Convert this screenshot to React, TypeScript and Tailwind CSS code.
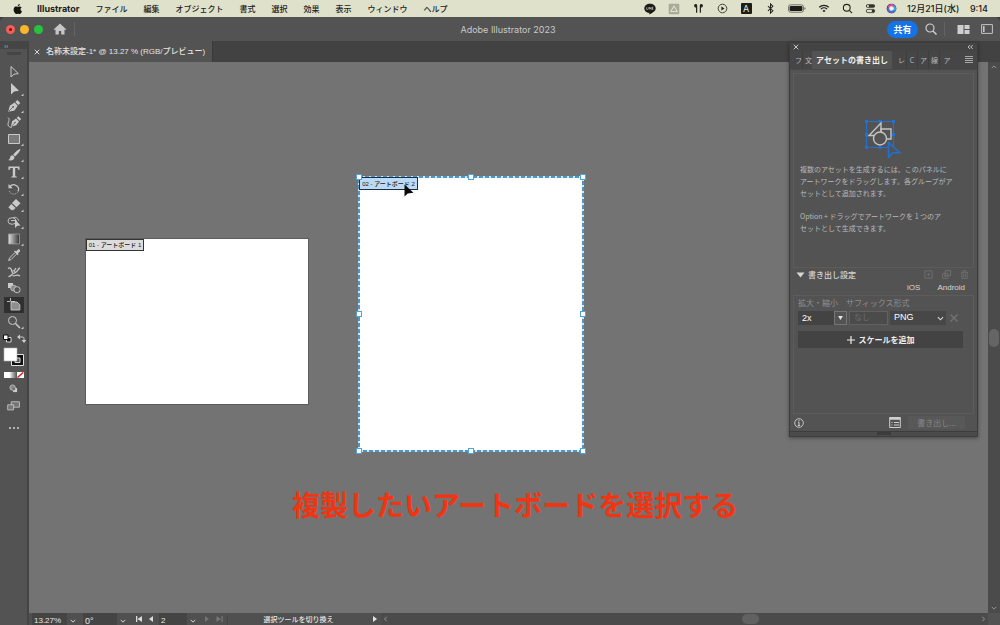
import React, { ReactNode } from "react";

const MENUS = ["ファイル", "編集", "オブジェクト", "書式", "選択", "効果", "表示", "ウィンドウ", "ヘルプ"];

/* ---------- macOS menu bar ---------- */

function AppleLogo() {
  return (
    <svg viewBox="0 0 24 24" className="h-3 w-3" fill="#151510">
      <path d="M17.05 12.7c0-2.6 2.1-3.8 2.2-3.9-1.2-1.8-3.1-2-3.7-2-1.6-.2-3.1.9-3.9.9s-2-.9-3.3-.9C6.600 6.800 5 7.800 4.100 9.300c-1.800 3.100-.5 7.700 1.300 10.200.9 1.200 1.900 2.600 3.200 2.600s1.800-.8 3.400-.8 2 .8 3.400.8 2.300-1.200 3.100-2.500c1-1.400 1.400-2.800 1.400-2.900-.1 0-2.800-1.100-2.850-4zM14.500 5.100c.7-.9 1.200-2.100 1.050-3.300-1 .05-2.300.7-3 1.550-.65.75-1.250 2-1.100 3.150 1.150.1 2.350-.6 3.050-1.400z" />
    </svg>
  );
}

function Slot({ width, label, children }: { width: string; label: string; children: ReactNode }) {
  return (
    <button aria-label={label} className={`flex h-full items-center justify-center ${width}`}>
      {children}
    </button>
  );
}

function MenuBar() {
  return (
    <header className="flex h-[17px] shrink-0 items-center bg-[#dfe1cb] pl-3 text-[8px] text-[#20201c]">
      <AppleLogo />
      <span className="ml-[13px] font-[Inter,sans-serif] text-[9px] font-bold">Illustrator</span>
      <nav className="ml-4 flex gap-4 whitespace-nowrap font-medium">
        {MENUS.map((m) => (
          <button key={m}>{m}</button>
        ))}
      </nav>
      <div className="ml-auto flex h-full items-center pr-3">
        <Slot width="w-6" label="LINE">
          <svg viewBox="0 0 12 12" className="h-3 w-3">
            <path d="M6 .8C2.900.8.3 2.800.3 5.400c0 2.200 2 4.100 4.700 4.500.4.1.4.4.3 1.500 2.500-1.200 6.400-3.300 6.400-6C11.700 2.800 9.100.8 6 .8z" fill="#1b1b18" />
            <path d="M2.700 4.200v2.200h1.200M4.700 4.200v2.200M5.700 6.400V4.200l1.300 2.200V4.200M9.300 4.200H8.100v2.200h1.200M8.100 5.300h1.100" fill="none" stroke="#dfe1cb" strokeWidth=".6" />
          </svg>
        </Slot>
        <Slot width="w-6" label="ドライブ">
          <svg viewBox="0 0 12 12" className="h-3 w-3">
            <rect x=".7" y=".7" width="10.600" height="10.600" rx="1" fill="#a9aa9c" />
            <path d="M6 3L2.800 8.500h6.400z" fill="none" stroke="#dfe1cb" strokeWidth="1.100" />
          </svg>
        </Slot>
        <Slot width="w-6" label="AirPods">
          <svg viewBox="0 0 12 12" className="h-[11px] w-[11px]" fill="#24241f">
            <path d="M1.200 3a1.700 1.700 0 0 1 3.400-.3V10.500H3.300V5C2 5 1.200 4.200 1.200 3zM10.800 3a1.700 1.700 0 0 0-3.400-.3V10.500h1.300V5C10 5 10.800 4.200 10.800 3z" />
          </svg>
        </Slot>
        <Slot width="w-6" label="再生中">
          <svg viewBox="0 0 12 12" className="h-[11px] w-[11px]">
            <circle cx="6" cy="6" r="4.700" fill="none" stroke="#24241f" strokeWidth=".9" />
            <path d="M4.800 3.900v4.200L8.200 6z" fill="#24241f" />
          </svg>
        </Slot>
        <Slot width="w-6" label="入力ソース">
          <span className="flex h-[11px] w-[11px] items-center justify-center rounded-[1px] bg-[#1d1d1a] font-[Inter,sans-serif] text-[9px] leading-none text-[#eeeedd]">A</span>
        </Slot>
        <Slot width="w-6" label="Bluetooth">
          <svg viewBox="0 0 12 12" className="h-[11px] w-[11px]">
            <path d="M3.200 3.500l5.400 4.900L6 11V1l2.600 2.600-5.400 4.900" fill="none" stroke="#24241f" strokeWidth="1.100" />
          </svg>
        </Slot>
        <Slot width="w-[29px]" label="バッテリー">
          <svg viewBox="0 0 18 9" className="h-[9px] w-[18px]">
            <rect x=".5" y=".8" width="15" height="7.400" rx="2" fill="none" stroke="#5b5b52" strokeWidth=".8" />
            <rect x="1.600" y="1.900" width="12.800" height="5.200" rx="1.100" fill="#1d1d1a" />
            <path d="M16.500 3.200v2.600c.8-.2 1-.7 1-1.300s-.2-1.100-1-1.300z" fill="#5b5b52" />
          </svg>
        </Slot>
        <Slot width="w-[25px]" label="Wi-Fi">
          <svg viewBox="0 0 12 10" className="h-[9px] w-3" fill="none" stroke="#1d1d1a" strokeWidth="1.300">
            <path d="M.7 3.600a7.600 7.600 0 0 1 10.600 0M2.600 5.700a4.900 4.900 0 0 1 6.800 0" />
            <path d="M6 9.200L4.300 7.500a2.500 2.500 0 0 1 3.400 0z" fill="#1d1d1a" stroke="none" />
          </svg>
        </Slot>
        <Slot width="w-[23px]" label="検索">
          <svg viewBox="0 0 12 12" className="h-[11px] w-[11px]" fill="none" stroke="#24241f" strokeWidth="1.200">
            <circle cx="5.200" cy="5.200" r="3.700" />
            <path d="M8 8l3 3" />
          </svg>
        </Slot>
        <Slot width="w-[22px]" label="コントロールセンター">
          <svg viewBox="0 0 12 12" className="h-[11px] w-[11px]">
            <rect x="1" y="1.300" width="10" height="4" rx="2" fill="#34342e" />
            <circle cx="3.200" cy="3.300" r="1.200" fill="#dfe1cb" />
            <rect x="1.400" y="6.900" width="9.200" height="3.600" rx="1.800" fill="none" stroke="#34342e" strokeWidth=".9" />
            <circle cx="8.800" cy="8.700" r="1.500" fill="#34342e" />
          </svg>
        </Slot>
        <Slot width="w-5" label="Siri">
          <svg viewBox="0 0 12 12" className="h-[11px] w-[11px]">
            <circle cx="6" cy="6" r="5.300" fill="#36344d" />
            <path d="M1.500 5a4.700 4.700 0 0 1 8-2.500L6 6z" fill="#d9529e" />
            <path d="M9.500 2.500a4.700 4.700 0 0 1 0 7L6 6z" fill="#3aa6d8" />
            <path d="M9.500 9.500A4.700 4.700 0 0 1 1.500 5L6 6z" fill="#5567d8" />
            <circle cx="6" cy="6" r="2.500" fill="#e9f2f4" />
          </svg>
        </Slot>
        <time className="ml-[6px] flex w-[81px] justify-between whitespace-nowrap font-[Inter,'Noto_Sans_CJK_JP',sans-serif] text-[9px] font-medium">
          <span>12月21日(水)</span>
          <span>9:14</span>
        </time>
      </div>
    </header>
  );
}

/* ---------- application title bar ---------- */

function TitleBar() {
  return (
    <div className="grid h-6 shrink-0 grid-cols-[1fr_auto_1fr] items-center rounded-t-[5px] bg-[#535353] text-[#c9c9c9]">
      <div className="flex items-center gap-[5px] pl-[6px]">
        <button aria-label="閉じる" className="flex h-[9px] w-[9px] items-center justify-center rounded-full bg-[#f25f57]">
          <span className="h-[3px] w-[3px] rounded-full bg-[#7d1009]" />
        </button>
        <button aria-label="しまう" className="h-[9px] w-[9px] rounded-full bg-[#f6b62e]" />
        <button aria-label="拡大" className="h-[9px] w-[9px] rounded-full bg-[#29c23f]" />
        <button aria-label="ホーム" className="ml-[5px]">
          <svg viewBox="0 0 14 12" className="h-3 w-[14px]" fill="#c6c6c6">
            <path d="M7 .5L.8 6.300l.8.8.9-.7v5.100h3.300V8h2.400v3.500h3.300V6.400l.9.7.8-.8z" />
          </svg>
        </button>
        <span className="ml-[2px] h-[14px] w-px bg-[#646464]" />
      </div>
      <h1 className="pt-px pl-4 font-[Inter,sans-serif] text-[9px]">Adobe Illustrator 2023</h1>
      <div className="flex items-center justify-end pr-[7px]">
        <button className="h-[17px] w-[31px] rounded-full bg-[#1473e6] text-[9px] leading-[17px] font-bold text-white">共有</button>
        <button aria-label="検索" className="ml-[7px]">
          <svg viewBox="0 0 12 12" className="h-3 w-3" fill="none" stroke="#cfcfcf" strokeWidth="1.200">
            <circle cx="5" cy="5" r="4" />
            <path d="M8 8l3.500 3.500" strokeWidth="1.500" />
          </svg>
        </button>
        <span className="ml-[7px] h-[14px] w-px bg-[#646464]" />
        <button aria-label="ドキュメントの整列" className="ml-[12px]">
          <svg viewBox="0 0 13 9" className="h-[9px] w-[13px]" fill="#cfcfcf">
            <path d="M.5 0h6v9h-6zM7.500 0h5v4h-5zM7.500 5h5v4h-5z" />
          </svg>
        </button>
        <button aria-label="ワークスペース" className="ml-[11px]">
          <svg viewBox="0 0 12 10" className="h-[10px] w-3">
            <path d="M.6.6h10.800v8.800H.6z" fill="none" stroke="#c4c4c4" />
            <path d="M2 2h1.600v6H2z" fill="#c4c4c4" />
          </svg>
        </button>
      </div>
    </div>
  );
}

/* ---------- tool bar ---------- */

const C = "#cacaca";

const TOOLS: { name: string; more?: boolean; active?: boolean; art: ReactNode }[] = [
  { name: "選択", art: <path d="M4 1.500v10.500l3-2.800 4.300-.6z" fill="none" stroke={C} /> },
  { name: "ダイレクト選択", more: true, art: <path d="M4 1v11.500l3.200-3L12 8.700z" fill={C} /> },
  {
    name: "ペン", more: true,
    art: (
      <g>
        <path d="M1.200 12.800L2.800 6.800l4.700-3.300 3.200 3.200-3.200 4.700z" fill={C} />
        <path d="M8.300 2.900L10.300 1l3 3-2 1.900z" fill={C} />
        <path d="M1.800 12.200l4-4" stroke="#535353" strokeWidth=".8" />
        <circle cx="6.200" cy="7.800" r=".9" fill="#535353" />
      </g>
    ),
  },
  {
    name: "曲線",
    art: (
      <g>
        <path d="M1 2.500c3 2-1.500 6 .5 8.500 1 1.200 2.500 1.500 3.500 1" fill="none" stroke={C} />
        <path d="M3.800 11.800L5.200 6.200 9 3.500 12 6.500 9.200 10.200z" fill={C} />
        <path d="M9.700 2.800l1.600-1.600L14.200 4.100l-1.600 1.600z" fill={C} />
        <path d="M4.500 11.200l3-3" stroke="#535353" strokeWidth=".7" />
        <circle cx="8" cy="7.500" r=".8" fill="#535353" />
      </g>
    ),
  },
  { name: "長方形", more: true, art: <path d="M1.500 2.500h11v9h-11z" fill="#7a7a7a" stroke={C} /> },
  {
    name: "ブラシ", more: true,
    art: (
      <g fill={C}>
        <path d="M13.200 1c-1.200-.4-6 3.900-7 5.900l1.700 1.700C9.800 7 14.100 2.300 13.200 1z" />
        <path d="M5.700 7.300c-1.900 0-2.400 1.300-2.700 2.600-.2 1-.9 1.700-2 2.100 2.200 1 6.600.5 6.400-3.100z" />
      </g>
    ),
  },
  {
    name: "文字", more: true,
    art: <path d="M1.500 1.500h11v3.500h-1.100c-.2-1.400-.6-1.900-2-1.900H8.200v7.600c0 .7.500.9 1.500.9v.9H4.300v-.9c1 0 1.500-.2 1.500-.9V3.100H4.600c-1.400 0-1.800.5-2 1.900H1.500z" fill={C} />,
  },
  {
    name: "回転", more: true,
    art: (
      <g>
        <path d="M3 4.500a5 5 0 0 1 8.500 1.500 5 5 0 0 1-.5 3.500" fill="none" stroke={C} strokeWidth="1.200" />
        <path d="M10.500 10.500A5 5 0 0 1 2 8.500" fill="none" stroke={C} strokeDasharray="1 1.200" />
        <path d="M1.500 2v4.200h4.200z" fill={C} />
      </g>
    ),
  },
  {
    name: "消しゴム", more: true,
    art: (
      <g>
        <path d="M5 5l4-4 4.500 4.300-4 4z" fill={C} />
        <path d="M4.300 5.700l4.500 4.300-2.300 2.300H4L1.200 9.200z" fill={C} stroke="#535353" strokeWidth=".5" />
      </g>
    ),
  },
  {
    name: "シェイプ形成", more: true,
    art: (
      <g>
        <ellipse cx="5" cy="6" rx="4" ry="3.300" fill="none" stroke={C} strokeWidth=".9" />
        <path d="M4 5.500h5.500M6 2.700c2.500-1 5 0 5.500 3" fill="none" stroke={C} strokeWidth=".9" />
        <path d="M8 4.500v8.500l2.300-2.200 3.200-.3z" fill={C} />
      </g>
    ),
  },
  { name: "グラデーション", more: true, art: <path d="M1.500 2h11v10h-11z" fill="url(#toolGradient)" stroke="#9a9a9a" strokeWidth=".8" /> },
  {
    name: "スポイト",
    art: (
      <g>
        <path d="M8 4.500L2.500 10l-.8 2.500L4 11.600l5.500-5.500" fill="none" stroke={C} />
        <path d="M7 3.500l3.700 3.700.9-.9-.7-.8 1.800-1.800c1.300-1.300-.6-3.200-1.900-1.900L9 3.600l-1-1z" fill={C} />
      </g>
    ),
  },
  {
    name: "パペットワープ",
    art: (
      <g fill="none" stroke={C} strokeWidth="1.300">
        <path d="M1 3.500c2-1.500 3.200 0 3.700 2s1.500 3.500 3.800 2S11 3.500 13 3M1.500 11.500c2.500.3 2.700-2 4.500-3M5.500 10.500c2.500 1.500 4-2 7.500.5M9 3L7 6" />
        <circle cx="6.800" cy="7" r="1.300" fill="#535353" strokeWidth="1" />
      </g>
    ),
  },
  {
    name: "ブレンド",
    art: (
      <g>
        <path d="M1 2h5v5H1z" fill={C} />
        <circle cx="6.500" cy="7" r="2.900" fill="#8a8a8a" stroke={C} strokeWidth=".7" />
        <circle cx="10" cy="8.700" r="3.100" fill="#535353" stroke={C} strokeWidth=".9" />
      </g>
    ),
  },
  {
    name: "アートボード", active: true,
    art: (
      <g>
        <path d="M3.500 0v3M0 3.500h3M3.500 3.500H8" stroke={C} strokeWidth=".9" />
        <path d="M4 4h6l2.800 2.600V12H4z" fill="#8e8e8e" stroke={C} strokeWidth=".9" />
      </g>
    ),
  },
  {
    name: "ズーム", more: true,
    art: (
      <g fill="none" stroke={C}>
        <circle cx="5.500" cy="5.500" r="4" />
        <path d="M8.500 8.500L13 13" strokeWidth="1.500" />
      </g>
    ),
  },
];

function ToolBar() {
  return (
    <aside className="flex w-[29px] shrink-0 flex-col items-center border-r-2 border-[#444444] bg-[#535353]">
      <div className="flex h-2 w-full shrink-0 items-center bg-[#454545] pl-1 text-[7px] leading-none text-[#bcbcbc]">››</div>
      <div className="mt-[3px] h-[3px] w-[14px] shrink-0 bg-[#454545]" />
      <div className="mt-[9px] flex h-[266px] w-full shrink-0 flex-col items-center">
        {TOOLS.map((t) => (
          <button
            key={t.name}
            aria-label={t.name}
            className={`flex w-[20px] flex-1 items-center justify-center ${t.active ? "bg-[#303030]" : ""}`}
          >
            <svg viewBox="0 0 18 14" className="ml-[4px] h-[14px] w-[18px] shrink-0">
              <defs>
                <linearGradient id="toolGradient">
                  <stop offset="0" stopColor="#dddddd" />
                  <stop offset="1" stopColor="#333333" />
                </linearGradient>
              </defs>
              {t.art}
              {t.more && <path d="M16.500 11.500V14H14z" fill={C} />}
            </svg>
          </button>
        ))}
      </div>
      <svg viewBox="0 0 24 32" className="mt-[4px] h-8 w-6 shrink-0">
        <path d="M4.500 3.500h4.500v4.500H4.500z" fill="#111111" stroke="#d8d8d8" />
        <path d="M1.500 1h4.500v4.500H1.500z" fill="#ffffff" stroke="#111111" />
        <path d="M17 3h3.500a1.500 1.500 0 0 1 1.500 1.500V7" fill="none" stroke={C} />
        <path d="M18 .5v5L15 3zM19.500 6h5L22 9z" fill={C} />
        <path d="M9.500 20.500h12v11h-12z" fill="#111111" stroke="#e0e0e0" />
        <path d="M13 24h5v4.500h-5z" fill="#535353" stroke="#e0e0e0" />
        <path d="M2 14h13v13H2z" fill="#ffffff" stroke="#b5b5b5" strokeWidth=".6" />
      </svg>
      <div className="mt-[6px] flex h-[6px] w-[20px] shrink-0">
        <button aria-label="カラー" className="flex-1 bg-white" />
        <button aria-label="グラデーション塗り" className="flex-1 bg-linear-to-r from-[#eeeeee] to-[#555555]" />
        <button aria-label="なし" className="flex-1 bg-white">
          <svg viewBox="0 0 7 6" className="h-[6px] w-full">
            <path d="M.5 5.700L6.500.3" stroke="#d8201c" strokeWidth="1.500" />
          </svg>
        </button>
      </div>
      <button aria-label="描画モード" className="mt-[6px] shrink-0">
        <svg viewBox="0 0 10 10" className="h-[9px] w-[9px]">
          <circle cx="4" cy="4" r="3" fill="#8a8a8a" stroke={C} strokeWidth=".8" />
          <path d="M4.500 4.500H9V9H4.500z" fill={C} />
          <circle cx="5.500" cy="5.500" r="1.400" fill="#6b6b6b" />
        </svg>
      </button>
      <button aria-label="スクリーンモード" className="mt-2 shrink-0">
        <svg viewBox="0 0 14 11" className="h-[10px] w-[13px]">
          <path d="M4.500.8h9v6h-9z" fill="#757575" stroke={C} strokeWidth=".9" />
          <path d="M.6 4.200h6.500v5.600H.6z" fill="#757575" stroke={C} strokeWidth=".9" />
        </svg>
      </button>
      <button aria-label="ツールバーを編集" className="mt-4 flex shrink-0 gap-[2px]">
        <i className="h-[2px] w-[2px] rounded-full bg-[#d0d0d0]" />
        <i className="h-[2px] w-[2px] rounded-full bg-[#d0d0d0]" />
        <i className="h-[2px] w-[2px] rounded-full bg-[#d0d0d0]" />
      </button>
    </aside>
  );
}

/* ---------- canvas ---------- */

const HANDLES = [
  "left-0 top-0", "left-1/2 top-0", "left-full top-0",
  "left-0 top-1/2", "left-full top-1/2",
  "left-0 top-full", "left-1/2 top-full", "left-full top-full",
];

function Canvas() {
  return (
    <main className="relative min-w-0 flex-1 overflow-hidden bg-[#737373]">
      <section className="absolute top-[176px] left-[56px] h-[167px] w-[224px] border border-[#5c5c5c] bg-white">
        <span className="block h-3 w-[58px] border border-[#333333] bg-[#dcdcdc] text-center font-['Liberation_Sans','Noto_Sans_CJK_JP',sans-serif] text-[6px] leading-[11px] font-medium whitespace-nowrap text-[#161616]">01 - アートボード 1</span>
      </section>
      <section className="absolute top-[115px] left-[330px] h-[274px] w-[224px] bg-white">
        <svg className="absolute inset-0 h-full w-full overflow-visible">
          <rect width="100%" height="100%" fill="none" stroke="#cfe6f4" strokeWidth="2" />
          <rect width="100%" height="100%" fill="none" stroke="#4f95c6" strokeWidth="2" strokeDasharray="4 2" />
        </svg>
        <span className="absolute top-0 left-0 block h-[13px] w-[59px] border border-[#1c2f42] bg-[#bddaf5] text-center font-['Liberation_Sans','Noto_Sans_CJK_JP',sans-serif] text-[6px] leading-[12px] font-medium whitespace-nowrap text-[#161616]">02 - アートボード 2</span>
        {HANDLES.map((h) => (
          <i key={h} className={`absolute h-[6px] w-[6px] -translate-x-1/2 -translate-y-1/2 border border-[#4ea3d8] bg-white ${h}`} />
        ))}
        <svg viewBox="0 0 10 14" className="absolute top-[7px] left-[45px] h-[14px] w-[10px]">
          <path d="M.5.5v12l3.200-3 5.800-.7z" fill="#0a0a0a" />
        </svg>
      </section>
      <p className="absolute top-[422px] left-[263px] text-[28px] leading-[40px] font-bold whitespace-nowrap text-[#f13412]">複製したいアートボードを選択する</p>
    </main>
  );
}

/* ---------- export panel ---------- */

function Chevron({ d = "M1 2.500l3 3 3-3", className = "h-[8px] w-[8px]" }: { d?: string; className?: string }) {
  return (
    <svg viewBox="0 0 8 8" className={className} fill="none" stroke="currentColor" strokeWidth="1.200">
      <path d={d} />
    </svg>
  );
}

function AssetArt() {
  return (
    <svg viewBox="0 0 38 40" className="h-10 w-[38px]" fill="none">
      <path d="M3.500 3.500h27v26h-27z" stroke="#2270d2" strokeWidth="1.200" />
      <g fill="#2270d2">
        <path d="M2 2h3v3H2zM15.500 2h3v3h-3zM29 2h3v3h-3zM2 15h3v3H2zM29 15h3v3h-3zM2 28h3v3H2zM15.500 28h3v3h-3z" />
      </g>
      <path d="M18 5v12.500H6z" stroke="#c4c4c4" strokeWidth="1.400" />
      <path d="M18 11h10v10H18z" stroke="#c4c4c4" strokeWidth="1.400" />
      <circle cx="17" cy="20.500" r="6.500" fill="#535353" stroke="#c4c4c4" strokeWidth="1.400" />
      <path d="M25.500 24.500v15l4-4.500 7-.5z" fill="#535353" stroke="#2270d2" strokeWidth="1.600" />
    </svg>
  );
}

function ExportPanel() {
  return (
    <section className="absolute top-[42px] right-[22px] flex w-[189px] flex-col border border-[#3c3c3c] bg-[#535353] text-[8px] text-[#d6d6d6] shadow-[0_1px_4px_#0006]">
      <div className="flex h-2 items-center justify-between bg-[#444444] px-[3px]">
        <button aria-label="パネルを閉じる"><Chevron className="h-[6px] w-[6px]" d="M1 1l6 6M7 1L1 7" /></button>
        <button aria-label="折りたたむ"><Chevron className="h-[6px] w-[8px]" d="M4 1.500L1.500 4 4 6.500M7.500 1.500L5 4l2.500 2.500" /></button>
      </div>
      <div role="tablist" className="flex h-[19px] items-stretch border-b border-[#484848] bg-[#464646] text-[#b9b9b9]">
        <button role="tab" className="ml-[5px] w-[8px] overflow-hidden border-r border-[#3d3d3d] text-[7px]">フ</button>
        <button role="tab" className="w-[9px] overflow-hidden pl-[2px] text-[7px]">文</button>
        <button role="tab" aria-selected="true" className="w-[80px] bg-[#535353] font-bold whitespace-nowrap text-[#f0f0f0]">アセットの書き出し</button>
        <div className="ml-1 flex">
          {["レ", "C", "ア", "線"].map((t) => (
            <button key={t} role="tab" className="w-[11px] overflow-hidden border-r border-[#3d3d3d] px-[2px] text-[7px]">{t}</button>
          ))}
          <button role="tab" className="w-[14px] text-[7px]">ア</button>
        </div>
        <button aria-label="パネルメニュー" className="mr-1 ml-auto">
          <svg viewBox="0 0 8 8" className="h-2 w-2" fill="#a8a8a8"><path d="M0 0h8v1H0zM0 2h8v1H0zM0 4h8v1H0zM0 6h8v1H0z" /></svg>
        </button>
      </div>
      <div className="mx-[3px] mt-[3px] flex h-[195px] flex-col border border-[#5c5c5c] px-[6px] text-[#b9b9b9]">
        <div className="ml-[63px] mt-[44px]"><AssetArt /></div>
        <p className="mt-[5px] text-[7px] leading-[12px] whitespace-nowrap">
          複数のアセットを生成するには、このパネルに<br />アートワークをドラッグします。各グループがア<br />セットとして追加されます。
        </p>
        <p className="mt-[11px] text-[7px] leading-[12px] whitespace-nowrap">
          Option + ドラッグでアートワークを 1 つのア<br />セットとして生成できます。
        </p>
      </div>
      <div className="flex h-[13px] items-center gap-[3px] pr-2 pl-[6px]">
        <svg viewBox="0 0 8 6" className="h-[6px] w-[9px]" fill="#d6d6d6"><path d="M0 .5h8L4 5.500z" /></svg>
        <h2 className="mr-auto font-medium">書き出し設定</h2>
        <div className="flex gap-[9px] text-[#707070]">
          <svg viewBox="0 0 10 10" className="h-[9px] w-[9px]" fill="none" stroke="currentColor"><path d="M1 1h8v8H1zM5 3.500v3M3.500 5h3" /></svg>
          <svg viewBox="0 0 10 10" className="h-[9px] w-[9px]" fill="none" stroke="currentColor"><path d="M3.500.7h6v5.500h-6zM.7 3.700h5.800v5.600H.7zM3.600 5v3M2 6.500h3" /></svg>
          <svg viewBox="0 0 10 10" className="h-[9px] w-[9px]" fill="none" stroke="currentColor"><path d="M1 2.500h8M3.500 2V.8h3V2M2 2.500v6.800h6V2.500M4 4v4M6 4v4" /></svg>
        </div>
      </div>
      <div className="flex h-[14px] items-center justify-end gap-[17px] pr-3 font-['Liberation_Sans',sans-serif]">
        <button>iOS</button>
        <button>Android</button>
      </div>
      <div className="mx-[3px] h-[119px] border border-[#5c5c5c] pt-px pl-1">
        <div className="flex h-[11px] items-center gap-2 leading-none whitespace-nowrap text-[#8f8f8f]">
          <label htmlFor="scale">拡大・縮小</label>
          <span><label htmlFor="suffix">サフィックス</label><label htmlFor="format">形式</label></span>
        </div>
        <div className="mt-[3px] flex h-[14px] items-stretch font-['Liberation_Sans','Noto_Sans_CJK_JP',sans-serif]">
          <input id="scale" defaultValue="2x" className="w-[36px] bg-[#434343] pt-[2px] pl-1 text-[9px] font-medium text-white" />
          <button aria-label="拡大率を選択" className="flex w-[13px] items-center justify-center border border-[#757575]">
            <svg viewBox="0 0 6 5" className="h-1 w-[5px]" fill="#e6e6e6"><path d="M0 0h6L3 5z" /></svg>
          </button>
          <input id="suffix" placeholder="なし" className="ml-[2px] w-[39px] border border-[#616161] bg-[#4b4b4b] pl-1 text-[8px] placeholder:text-[#6c6c6c]" />
          <div className="relative ml-[2px] flex w-[56px] items-center bg-[#474747]">
            <select id="format" className="h-full w-full appearance-none pl-1 text-[9px] text-white">
              <option>PNG</option>
            </select>
            <Chevron className="pointer-events-none absolute right-[2px] h-[7px] w-[7px]" />
          </div>
          <button aria-label="スケールを削除" className="ml-1 text-[#757575]"><Chevron d="M.5.5l7 7M7.500.5l-7 7" /></button>
        </div>
        <button className="mt-[6px] flex h-[17px] w-[165px] items-center justify-center gap-1 bg-[#434343] font-bold text-[#eeeeee]">
          <Chevron d="M4 0v8M0 4h8" />
          スケールを追加
        </button>
      </div>
      <div className="flex h-[17px] items-center pr-3 pl-1">
        <svg viewBox="0 0 10 10" className="h-[10px] w-[10px]" fill="none" stroke="#cfcfcf">
          <circle cx="5" cy="5" r="4.300" strokeWidth=".9" /><path d="M5 2v1.200M4 4.300h1v3.200M3.900 7.500h2.200" />
        </svg>
        <button aria-label="書き出し用の設定" className="ml-auto">
          <svg viewBox="0 0 12 11" className="h-[11px] w-3" fill="none" stroke="#cfcfcf">
            <path d="M.7.5h10.600v10H.7z" /><path d="M.7 1.500h10.600" strokeWidth="2.500" /><path d="M2.500 5.500h1M5 5.500h5M2.500 8h1M5 8h5" />
          </svg>
        </button>
        <button disabled className="ml-[7px] h-[13px] w-[57px] bg-[#585858] leading-[13px] text-[#858585]">書き出し...</button>
      </div>
      <div className="flex h-[5px] justify-center border-t border-[#3c3c3c] bg-[#4b4b4b]"><span className="mb-px w-[14px] bg-[#3c3c3c]" /></div>
    </section>
  );
}

/* ---------- status bar ---------- */

function StatusBar() {
  return (
    <footer className="flex h-3 shrink-0 overflow-hidden bg-[#4b4b4b] text-[#e6e6e6]">
      <div className="flex h-[15px] w-[352px] shrink-0 items-center bg-[#505050] font-['Liberation_Sans','Noto_Sans_CJK_JP',sans-serif] text-[8px]">
        <input aria-label="ズーム" defaultValue="13.27%" className="ml-[3px] h-full w-[35px] bg-[#444444] pl-[2px]" />
        <button aria-label="ズームを選択" className="flex w-3 justify-center"><Chevron className="h-[6px] w-[6px]" /></button>
        <input aria-label="回転" defaultValue="0°" className="ml-1 h-full w-[34px] bg-[#444444] pl-[2px] text-[9px]" />
        <button aria-label="回転を選択" className="flex w-3 justify-center"><Chevron className="h-[6px] w-[6px]" /></button>
        <button aria-label="最初" className="ml-[7px] pb-1">
          <svg viewBox="0 0 7 6" className="h-[6px] w-[7px]" fill="#dcdcdc"><path d="M0 0h1.300v6H0zM1.500 3L6 0v6z" /></svg>
        </button>
        <button aria-label="前へ" className="ml-[6px] pb-1">
          <svg viewBox="0 0 4 6" className="h-[6px] w-1" fill="#dcdcdc"><path d="M0 3l4-3v6z" /></svg>
        </button>
        <input aria-label="アートボード番号" defaultValue="2" className="ml-[6px] h-full w-[28px] bg-[#444444] pl-[2px]" />
        <button aria-label="アートボードを選択" className="flex w-3 justify-center"><Chevron className="h-[6px] w-[6px]" /></button>
        <button aria-label="次へ" className="ml-[6px] pb-1">
          <svg viewBox="0 0 4 6" className="h-[6px] w-1" fill="#757575"><path d="M4 3L0 0v6z" /></svg>
        </button>
        <button aria-label="最後" className="ml-[7px] pb-1">
          <svg viewBox="0 0 7 6" className="h-[6px] w-[7px]" fill="#757575"><path d="M5.500 0h1.300v6H5.500zM5 3L.5 0v6z" /></svg>
        </button>
        <span className="ml-1 flex-1 border-l border-[#464646] pr-1 text-center text-[7px] font-medium">選択ツールを切り換え</span>
        <button aria-label="表示項目" className="mr-1 pb-1">
          <svg viewBox="0 0 4 6" className="h-[6px] w-1" fill="#e6e6e6"><path d="M4 3L0 0v6z" /></svg>
        </button>
      </div>
      <div className="flex flex-1 items-center justify-between px-[2px] text-[#9c9c9c]">
        <Chevron className="h-[6px] w-[6px]" d="M5 1L2 4l3 3" />
        <span className="ml-[132px] h-[10px] w-[17px] rounded-full bg-[#616161]" />
        <Chevron className="h-[6px] w-[6px]" d="M3 1l3 3-3 3" />
      </div>
      <div className="w-3 bg-[#535353]" />
    </footer>
  );
}

export default function App() {
  return (
    <div className="relative flex h-screen flex-col overflow-hidden bg-[#3a3a38] font-['Noto_Sans_CJK_JP',sans-serif]">
      <MenuBar />
      <TitleBar />
      <div className="flex min-h-0 flex-1">
        <ToolBar />
        <div className="flex min-w-0 flex-1 flex-col">
          <div className="flex h-[21px] shrink-0 bg-[#424242]">
            <div className="flex w-[184px] items-center gap-[6px] border-r border-[#393939] bg-[#535353] pl-[5px] text-[#e4e4e4]">
              <button aria-label="タブを閉じる"><Chevron className="h-[6px] w-[6px]" d="M1 1l6 6M7 1L1 7" /></button>
              <span className="font-['Liberation_Sans','Noto_Sans_CJK_JP',sans-serif] text-[8px] font-medium whitespace-nowrap">名称未設定-1* @ 13.27 % (RGB/プレビュー)</span>
            </div>
          </div>
          <div className="flex min-h-0 flex-1">
            <Canvas />
            <div className="flex w-3 shrink-0 flex-col items-center justify-between bg-[#4b4b4b] py-[2px] text-[#9c9c9c]">
              <Chevron className="h-[6px] w-[6px]" d="M1 5.500l3-3 3 3" />
              <span className="h-[18px] w-[10px] rounded-full bg-[#656565]" />
              <Chevron className="h-[6px] w-[6px]" />
            </div>
          </div>
          <StatusBar />
        </div>
      </div>
      <ExportPanel />
    </div>
  );
}
